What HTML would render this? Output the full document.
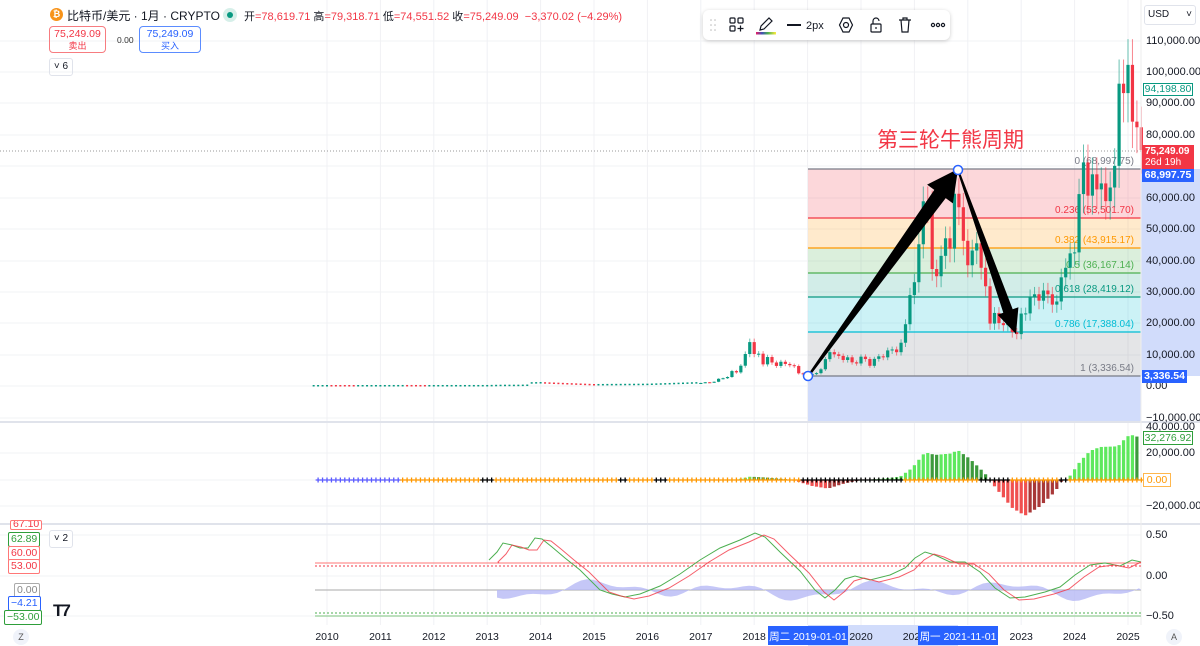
<!DOCTYPE html>
<html><head><meta charset="utf-8">
<style>
*{margin:0;padding:0;box-sizing:border-box}
body{width:1200px;height:646px;overflow:hidden;background:#fff;font-family:"Liberation Sans","Noto Sans CJK SC",sans-serif;position:relative;color:#131722}
.a{position:absolute}
.ax{position:absolute;font-size:11px;color:#131722;left:1146px}
.bx{position:absolute;font-size:10.5px;border:1px solid;border-radius:2px;padding:0 2px;line-height:13px;background:#fff}
</style></head><body>
<svg id="s" class="a" style="left:0;top:0" width="1200" height="646"></svg>

<div class="a" style="left:50px;top:8px;width:13px;height:13px;border-radius:50%;background:#f7931a;color:#fff;font-size:9px;text-align:center;line-height:13px;font-weight:bold">₿</div>
<div class="a" style="left:67px;top:7px;font-size:12px;white-space:nowrap">比特币/美元 · 1月 · CRYPTO</div>
<div class="a" style="left:223px;top:8px;width:14px;height:14px;border-radius:50%;background:#d6efe9"></div>
<div class="a" style="left:227px;top:12px;width:6px;height:6px;border-radius:50%;background:#089981"></div>
<div class="a" style="left:244px;top:8px;font-size:11px;white-space:nowrap;color:#131722">开<span style="color:#f23645">=78,619.71</span> 高<span style="color:#f23645">=79,318.71</span> 低<span style="color:#f23645">=74,551.52</span> 收<span style="color:#f23645">=75,249.09 &nbsp;−3,370.02 (−4.29%)</span></div>
<div class="a" style="left:49px;top:26px;width:57px;height:27px;border:1px solid #f77c80;border-radius:4px;text-align:center;color:#f23645;font-size:10.5px;line-height:12px;padding-top:1px">75,249.09<br><span style="font-size:9px">卖出</span></div>
<div class="a" style="left:117px;top:35px;font-size:8.5px;color:#333">0.00</div>
<div class="a" style="left:139px;top:26px;width:62px;height:27px;border:1px solid #5b8cff;border-radius:4px;text-align:center;color:#2962ff;font-size:10.5px;line-height:12px;padding-top:1px">75,249.09<br><span style="font-size:9px">买入</span></div>
<div class="a" style="left:49px;top:58px;width:24px;height:18px;border:1px solid #e0e3eb;border-radius:3px;font-size:10px;text-align:center;line-height:16px">˅ 6</div>
<div class="a" style="left:49px;top:530px;width:24px;height:18px;border:1px solid #e0e3eb;border-radius:3px;font-size:10px;text-align:center;line-height:16px;background:#fff">˅ 2</div>

<div class="a" style="left:703px;top:10px;width:247px;height:30px;background:#fff;border-radius:6px;box-shadow:0 1px 4px rgba(0,0,0,.2)"></div>
<svg class="a" style="left:703px;top:10px" width="247" height="30" fill="none" stroke="#131722" stroke-width="1.2">
<g fill="#bbb" stroke="none"><circle cx="8" cy="10" r=".8"/><circle cx="12" cy="10" r=".8"/><circle cx="8" cy="15" r=".8"/><circle cx="12" cy="15" r=".8"/><circle cx="8" cy="20" r=".8"/><circle cx="12" cy="20" r=".8"/></g>
<rect x="27" y="8" width="5" height="5" rx="1"/><rect x="35" y="8" width="5" height="5" rx="1"/><rect x="27" y="16" width="5" height="5" rx="1"/><path d="M37.5 15.5v6M34.5 18.5h6"/>
<path d="M57 20l1-4 8-8 3 3-8 8z"/>
<rect x="53" y="22" width="20" height="2.5" fill="url(#rb)" stroke="none"/>
<defs><linearGradient id="rb"><stop offset="0" stop-color="#e91e63"/><stop offset=".3" stop-color="#3f51b5"/><stop offset=".6" stop-color="#4caf50"/><stop offset="1" stop-color="#ffeb3b"/></linearGradient></defs>
<path d="M84 15h14" stroke-width="2"/>
<text x="103" y="19" font-size="11" fill="#131722" stroke="none" font-family="Liberation Sans">2px</text>
<path d="M140 8l6 0 3.5 7-3.5 7h-6l-3.5-7z"/><circle cx="143" cy="15" r="2.5"/>
<rect x="168" y="14" width="10" height="8" rx="1"/><path d="M170 14v-3a3 3 0 0 1 6 0"/><path d="M173 17v2"/>
<path d="M196 10h12M200 10V8h4v2M198 10l1 12h6l1-12"/>
<g fill="none"><circle cx="230" cy="15" r="1.6"/><circle cx="235" cy="15" r="1.6"/><circle cx="240" cy="15" r="1.6"/></g>
</svg>
<div class="a" style="left:1144px;top:5px;width:52px;height:20px;border:1px solid #e0e3eb;border-radius:3px;font-size:10px;line-height:18px;padding-left:3px">USD <span style="float:right;padding-right:3px">˅</span></div>

<div class="a" style="left:877px;top:124px;font-size:21px;color:#f23645;font-family:'Noto Sans CJK SC',sans-serif">第三轮牛熊周期</div>

<div class="ax" style="top:35px">110,000.00</div>
<div class="ax" style="top:66px">100,000.00</div>
<div class="ax" style="top:97px">90,000.00</div>
<div class="ax" style="top:129px">80,000.00</div>
<div class="ax" style="top:192px">60,000.00</div>
<div class="ax" style="top:223px">50,000.00</div>
<div class="ax" style="top:255px">40,000.00</div>
<div class="ax" style="top:286px">30,000.00</div>
<div class="ax" style="top:317px">20,000.00</div>
<div class="ax" style="top:349px">10,000.00</div>
<div class="ax" style="top:380px">0.00</div>
<div class="ax" style="top:412px">−10,000.00</div>
<div class="a" style="left:1143px;top:83px;width:50px;height:13px;border:1px solid #089981;color:#089981;font-size:10.5px;line-height:11px;text-align:center;background:#fff">94,198.80</div>
<div class="a" style="left:1142px;top:145px;width:52px;height:24px;background:#f23645;color:#fff;font-size:10px;line-height:11px;padding:1px 3px;font-weight:bold">75,249.09<br><span style="font-weight:normal">26d 19h</span></div>
<div class="a" style="left:1142px;top:169px;width:52px;height:13px;background:#2962ff;color:#fff;font-size:10.5px;line-height:13px;text-align:center;font-weight:bold">68,997.75</div>
<div class="a" style="left:1142px;top:370px;width:45px;height:13px;background:#2962ff;color:#fff;font-size:10.5px;line-height:13px;text-align:center;font-weight:bold">3,336.54</div>

<div class="ax" style="top:421px">40,000.00</div>
<div class="a" style="left:1143px;top:431px;width:50px;height:14px;border:1px solid #2e9e3a;color:#2e9e3a;font-size:10.5px;line-height:12px;text-align:center;background:#fff">32,276.92</div>
<div class="ax" style="top:447px">20,000.00</div>
<div class="a" style="left:1143px;top:473px;width:28px;height:14px;border:1px solid #ffb74d;color:#ff9800;font-size:10.5px;line-height:12px;text-align:center;background:#fff">0.00</div>
<div class="ax" style="top:500px">−20,000.00</div>
<div class="ax" style="top:529px">0.50</div>
<div class="ax" style="top:570px">0.00</div>
<div class="ax" style="top:610px">−0.50</div>

<div class="bx" style="left:10px;top:520px;border-color:#f77;color:#f23645;height:10px;overflow:hidden;line-height:6px">67.10</div>
<div class="bx" style="left:8px;top:532px;border-color:#2e9e3a;color:#2e9e3a">62.89</div>
<div class="bx" style="left:8px;top:546px;border-color:#f77;color:#f23645">60.00</div>
<div class="bx" style="left:8px;top:559px;border-color:#f77;color:#f23645">53.00</div>
<div class="bx" style="left:14px;top:583px;border-color:#aaa;color:#888">0.00</div>
<div class="bx" style="left:8px;top:596px;border-color:#2962ff;color:#2962ff">−4.21</div>
<div class="bx" style="left:4px;top:610px;border-color:#2e9e3a;color:#2e9e3a">−53.00</div>
<div class="a" style="left:53px;top:601px;font-size:17px;font-weight:bold;letter-spacing:-2px">T7</div>
<div class="a" style="left:13px;top:629px;width:16px;height:16px;border-radius:50%;background:#f0f3fa;font-size:9px;text-align:center;line-height:16px;color:#555">Z</div>
<div class="a" style="left:1166px;top:629px;width:16px;height:16px;border-radius:50%;background:#f0f3fa;font-size:9px;text-align:center;line-height:16px;color:#555">A</div>

<script>
const s=document.getElementById('s');let h='';
const Y=v=>386-v*0.003136;
const X=i=>327+i*4.45;
for(let y of [41,72,103,135,166,198,229,261,292,323,355,386,418,453,480,506,535,576,616])h+=`<line x1="0" x2="1141" y1="${y}" y2="${y}" stroke="#f2f3f5"/>`;
for(let k=0;k<16;k++){let x=327+k*53.4;h+=`<line x1="${x}" x2="${x}" y1="0" y2="625" stroke="#f0f1f4"/>`}
const L=[[169,218,'rgba(242,54,69,.2)','#787b86'],[218,248,'rgba(255,152,0,.2)','#f23645'],[248,273,'rgba(76,175,80,.2)','#ff9800'],[273,297,'rgba(8,153,129,.18)','#4caf50'],[297,332,'rgba(0,188,212,.2)','#089981'],[332,376,'rgba(120,123,134,.2)','#00bcd4']];
h+=`<rect x="808" y="376" width="333" height="46" fill="#d1dcfb"/>`;
h+=`<rect x="1141" y="169" width="59" height="207" fill="#d1dcfb"/>`;
L.forEach(l=>{h+=`<rect x="808" y="${l[0]}" width="333" height="${l[1]-l[0]}" fill="${l[2]}"/><line x1="808" x2="1141" y1="${l[0]}" y2="${l[0]}" stroke="${l[3]}" stroke-width="1.3"/>`});
h+=`<line x1="808" x2="1141" y1="376" y2="376" stroke="#787b86" stroke-width="1.3"/>`;
const ft=[[164,'0 (68,997.75)','#787b86'],[213,'0.236 (53,501.70)','#f23645'],[243,'0.382 (43,915.17)','#ff9800'],[268,'0.5 (36,167.14)','#4caf50'],[292,'0.618 (28,419.12)','#089981'],[327,'0.786 (17,388.04)','#00bcd4'],[371,'1 (3,336.54)','#787b86']];
ft.forEach(f=>h+=`<text x="1134" y="${f[0]}" text-anchor="end" font-size="10" fill="${f[2]}" font-family="Liberation Sans">${f[1]}</text>`);
h+=`<line x1="0" x2="1141" y1="151" y2="151" stroke="#999" stroke-dasharray="1 2"/>`;
const kp=[[0,0.1],[6,0.07],[12,0.3],[17,15],[22,3],[36,13],[39,90],[43,100],[47,200],[46,900],[48,950],[60,320],[72,430],[84,960]];
const c=[];
for(let i=0;i<=84;i++){let a=kp[0],b=kp[kp.length-1];for(let j=0;j<kp.length-1;j++)if(i>=kp[j][0]&&i<=kp[j+1][0]){a=kp[j];b=kp[j+1]}c[i]=a[0]==b[0]?a[1]:a[1]+(b[1]-a[1])*(i-a[0])/(b[0]-a[0])}
const rest=[1190,1080,1350,2300,2480,2870,4760,4340,6470,10200,14000,10200,10300,6900,9240,7500,6400,7730,7030,6630,6370,4040,3740,3460,3850,4100,5330,8570,10800,10100,9600,8300,9150,7550,7190,9350,8600,6440,8650,9460,9140,11350,11650,10780,13800,19700,28990,33100,45200,58900,57700,37300,35000,41500,47100,43800,61300,57000,46300,38500,43200,45500,37700,31800,19900,23300,20050,19400,20500,17150,16550,23100,23150,28500,29250,27200,30450,29250,25950,26950,34650,37700,42300,42600,61200,71300,60700,67500,62700,64600,58950,63300,70200,96400,93400,102400,84300,82500,75249];
c.length=85;c[84]=970;rest.forEach(v=>c.push(v));
for(let i=-3;i<c.length;i++){const cl=c[Math.max(i,0)],op=i>0?c[i-1]:cl;const x=X(i);if(i<84){h+=`<rect x="${x-1}" y="${Y(cl)-1}" width="2" height="1.5" fill="${cl>=op?'#089981':'#f23645'}"/>`;continue}
const up=cl>=op,col=up?'#089981':'#f23645',hi=Math.max(cl,op)*1.08,lo=Math.min(cl,op)*0.9;
h+=`<line x1="${x}" x2="${x}" y1="${Y(hi)}" y2="${Y(lo)}" stroke="${col}" stroke-opacity=".6"/><rect x="${x-1.6}" y="${Y(Math.max(cl,op))}" width="3.2" height="${Math.max(1,Y(Math.min(cl,op))-Y(Math.max(cl,op)))}" fill="${col}"/>`}
h+=`<path d="M807 376 L934.3 189.9 L927.1 184.6 L958 169 L952.9 203.4 L945.7 198.1 L809 377 Z" fill="#000"/>`;
h+=`<path d="M957 170 L1003.3 312.7 L997.6 314.7 L1016 334 L1018.4 307.3 L1012.7 309.3 L959 170Z" fill="#000"/>`;
h+=`<circle cx="808" cy="376" r="4.5" fill="#fff" stroke="#2962ff" stroke-width="1.5"/><circle cx="958" cy="170" r="4.5" fill="#fff" stroke="#2962ff" stroke-width="1.5"/>`;
h+=`<line x1="0" x2="1200" y1="422" y2="422" stroke="#e0e3eb" stroke-width="2"/><line x1="0" x2="1200" y1="524" y2="524" stroke="#e0e3eb" stroke-width="2"/><line x1="1141" x2="1141" y1="0" y2="625" stroke="#eee"/>`;
const hk=[[735,0],[750,2500],[765,2000],[790,300],[797,-1000],[812,-4500],[828,-6500],[845,-2500],[860,-300],[870,400],[885,1200],[900,2500],[912,9000],[925,21000],[935,19000],[950,20000],[958,22500],[970,16000],[985,5000],[990,-500],[1000,-10000],[1012,-21000],[1025,-27000],[1040,-20000],[1055,-9000],[1062,-500],[1068,1000],[1080,14000],[1090,22000],[1100,25000],[1118,25500],[1127,33000],[1132,34000],[1141,32000]];
const hv=x=>{if(x<hk[0][0]||x>1141)return 0;for(let j=0;j<hk.length-1;j++){const a=hk[j],b=hk[j+1];if(x>=a[0]&&x<=b[0])return a[1]+(b[1]-a[1])*(x-a[0])/(b[0]-a[0])}return 0};
const MY=v=>480-v*0.00132;
for(let i=-3;i<c.length;i++){const x=X(i);if(x<315)continue;const v=hv(x),pv=hv(x-4.45);
 if(Math.abs(v)>100){let col=v>=0?(v>=pv?'#5ee85e':'#3c9a3c'):(v<pv?'#f05050':'#a83838');h+=`<rect x="${x-1.6}" y="${Math.min(MY(v),480)}" width="3.2" height="${Math.abs(MY(v)-480)}" fill="${col}"/>`}
 const col=x<400?'#5b5bff':((x>480&&x<495)||(x>800&&x<905)||(x>980&&x<1012)||x>620&&x<628||x>652&&x<668||x>1060&&x<1067?'#000':'#ff9800');
 h+=`<path d="M${x-2.5} 480h5M${x} 477.5v5" stroke="${col}" stroke-width="1.3"/>`}
h+=`<line x1="315" x2="1141" y1="563" y2="563" stroke="#f77" /><line x1="315" x2="1141" y1="566" y2="566" stroke="#f23645" stroke-dasharray="2 2"/><line x1="315" x2="1141" y1="590" y2="590" stroke="#aaa"/><line x1="315" x2="1141" y1="613" y2="613" stroke="#4caf50" stroke-dasharray="2 2"/><line x1="315" x2="1141" y1="616" y2="616" stroke="#a5d6a7" stroke-width="1.5"/>`;
const g=[[489,560],[497,552],[503,543],[512,545],[520,548],[528,548],[535,538],[542,539],[552,547],[565,558],[580,570],[600,590],[612,594],[625,597],[640,594],[660,586],[680,574],[700,560],[720,548],[740,540],[755,533],[765,537],[780,552],[800,571],[815,590],[825,598],[835,590],[845,579],[855,576],[870,580],[890,575],[905,568],[915,558],[925,552],[935,555],[950,562],[965,562],[980,572],[995,588],[1010,598],[1025,597],[1045,592],[1060,587],[1075,575],[1090,565],[1105,563],[1120,566],[1132,560],[1141,562]];
const red=g.map(p=>[p[0]+9,p[1]+2]).filter(p=>p[0]<=1141);red.unshift([499,563]);
let ar='M497 590 ';for(let x=497;x<=1141;x+=6){ar+=`L${x} ${590-(Math.sin(x*0.045)*6+Math.sin(x*0.11)*3+Math.cos(x*0.02)*3)}`}ar+='L1141 590Z';
h+=`<path d="${ar}" fill="#b6b9f5" opacity=".8"/>`;
h+=`<polyline points="${g.map(p=>p.join(',')).join(' ')}" fill="none" stroke="#4caf50"/>`;
h+=`<polyline points="${red.map(p=>p.join(',')).join(' ')}" fill="none" stroke="#f23645" stroke-opacity=".8"/>`;
h+=`<rect x="808" y="625" width="150" height="21" fill="#d1dcfb"/>`;
for(let k=0;k<16;k++){h+=`<text x="${327+k*53.4}" y="640" text-anchor="middle" font-size="10.5" fill="#131722" font-family="Liberation Sans">${2010+k}</text>`}
h+=`<rect x="768" y="626" width="80" height="19" fill="#2962ff"/><text x="808" y="640" text-anchor="middle" font-size="10.5" fill="#fff" font-family="Liberation Sans,Noto Sans CJK SC">周二 2019-01-01</text>`;
h+=`<rect x="918" y="626" width="80" height="19" fill="#2962ff"/><text x="958" y="640" text-anchor="middle" font-size="10.5" fill="#fff" font-family="Liberation Sans,Noto Sans CJK SC">周一 2021-11-01</text>`;
s.innerHTML=h;
</script>
</body></html>
